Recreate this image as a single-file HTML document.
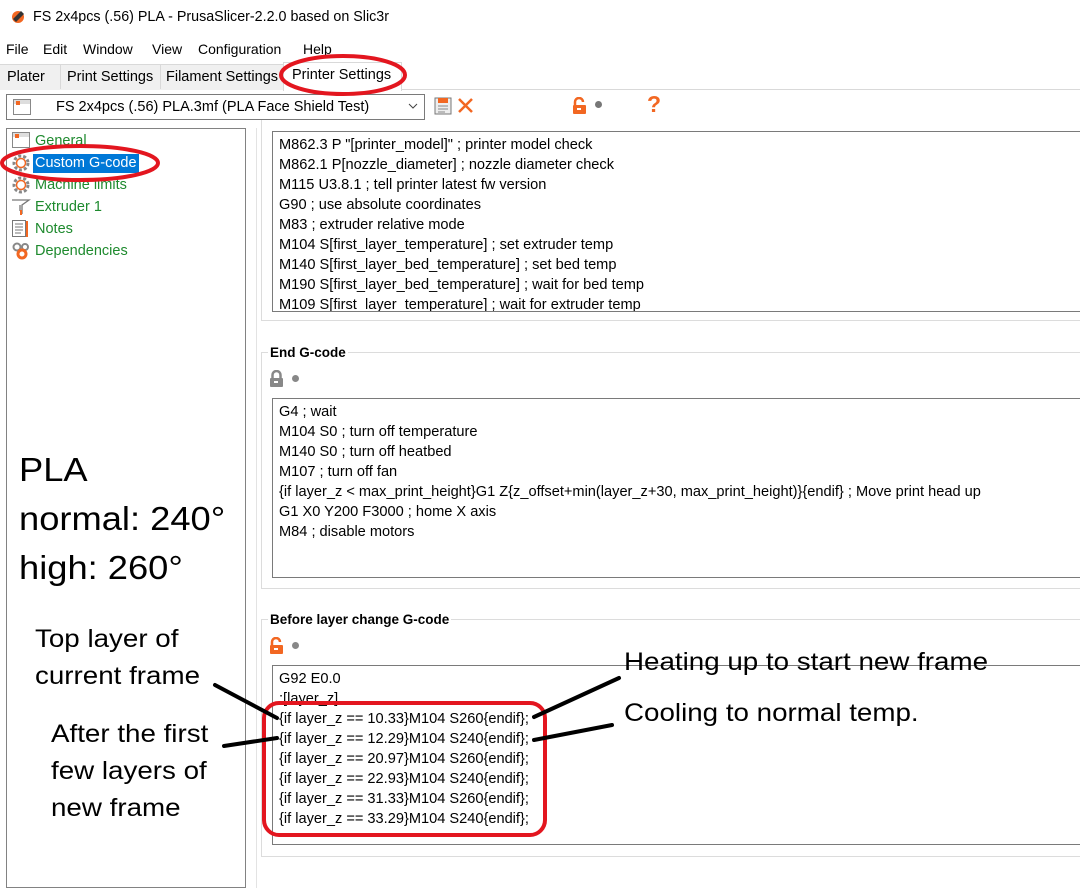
<!DOCTYPE html>
<html><head><meta charset="utf-8"><style>
body{margin:0;width:1080px;height:875px;background:#fff;position:relative;overflow:hidden;font-family:"Liberation Sans",sans-serif;color:#000}
.a{position:absolute;white-space:nowrap}
.s{font-size:14px}
.code{position:absolute;border:1px solid #7a7a7a;background:#fff;font-size:14.6px;line-height:20px;padding:3px 0 0 6px;box-sizing:border-box;overflow:hidden}
.grp{position:absolute;border:1px solid #dcdcdc}
.tree{position:absolute;left:35px;font-size:14.5px;color:#1e8a2e}
.big{font-size:33px;position:absolute;white-space:nowrap;transform:scaleX(1.1);transform-origin:0 0}
.mid{font-size:25px;position:absolute;white-space:nowrap;transform:scaleX(1.11);transform-origin:0 0}
</style></head><body>
<svg class="a" style="left:11px;top:10px" width="14" height="14"><circle cx="7" cy="7" r="6" fill="#f26722"/><path d="M2 9 L10 1 L13 4 L5 12Z" fill="#333"/></svg>
<div class="a s" style="left:33px;top:9px;font-size:14.3px">FS 2x4pcs (.56) PLA - PrusaSlicer-2.2.0 based on Slic3r</div>
<div class="a s" style="left:6px;top:41px">File</div>
<div class="a s" style="left:43px;top:41px">Edit</div>
<div class="a s" style="left:83px;top:41px">Window</div>
<div class="a s" style="left:152px;top:41px">View</div>
<div class="a s" style="left:198px;top:41px">Configuration</div>
<div class="a s" style="left:303px;top:41px">Help</div>
<div class="a" style="left:0;top:63px;width:1080px;height:26px;border-bottom:1px solid #d9d9d9;background:#fff"></div>
<div class="a" style="left:0;top:64px;width:283px;height:25px;background:#f0f0f0;border-top:1px solid #d9d9d9"></div>
<div class="a" style="left:60px;top:65px;width:1px;height:24px;background:#d9d9d9"></div>
<div class="a" style="left:160px;top:65px;width:1px;height:24px;background:#d9d9d9"></div>
<div class="a" style="left:283px;top:62px;width:117px;height:28px;background:#fff;border:1px solid #d9d9d9;border-bottom:none"></div>
<div class="a s" style="left:7px;top:69px;font-size:14.5px">Plater</div>
<div class="a s" style="left:67px;top:69px;font-size:14.5px">Print Settings</div>
<div class="a s" style="left:166px;top:69px;font-size:14.5px">Filament Settings</div>
<div class="a s" style="left:292px;top:67px;font-size:14.5px">Printer Settings</div>
<div class="a" style="left:6px;top:94px;width:419px;height:26px;border:1px solid #7a7a7a;box-sizing:border-box"></div>
<svg class="a" style="left:13px;top:99px" width="18" height="16"><rect x="0.5" y="0.5" width="17" height="15" fill="#fff" stroke="#888"/><rect x="1" y="1" width="16" height="4" fill="#ddd"/><rect x="3" y="2" width="4" height="4" fill="#f26722"/></svg>
<div class="a s" style="left:56px;top:99px;font-size:14.5px">FS 2x4pcs (.56) PLA.3mf (PLA Face Shield Test)</div>
<svg class="a" style="left:408px;top:103px" width="10" height="7"><path d="M1 1 L5 5 L9 1" stroke="#444" fill="none"/></svg>
<svg class="a" style="left:434px;top:97px" width="18" height="18"><rect x="1" y="1" width="16" height="16" fill="#eee" stroke="#777"/><rect x="4" y="1" width="10" height="5" fill="#f26722"/><path d="M4 9h10M4 12h10M4 15h7" stroke="#888"/></svg>
<svg class="a" style="left:457px;top:97px" width="17" height="17"><path d="M2 2 L15 15 M15 2 L2 15" stroke="#f26722" stroke-width="2.5"/></svg>
<svg class="a" style="left:572px;top:97px" width="16" height="18"><path d="M3 8 V5 a4 4 0 0 1 8 0" stroke="#f26722" stroke-width="2.5" fill="none"/><rect x="1" y="8" width="13" height="9" rx="1" fill="#f26722"/><rect x="5" y="11" width="4" height="2" fill="#fff"/></svg>
<div class="a" style="left:595px;top:101px;width:7px;height:7px;border-radius:50%;background:#777"></div>
<div class="a" style="left:647px;top:91px;font-size:23px;font-weight:bold;color:#f26722">?</div>
<div class="a" style="left:6px;top:128px;width:240px;height:760px;border:1px solid #828282;box-sizing:border-box"></div>
<svg class="a" style="left:12px;top:132px" width="18" height="16"><rect x="0.5" y="0.5" width="17" height="15" fill="#fff" stroke="#888"/><rect x="1" y="1" width="16" height="4" fill="#ddd"/><rect x="3" y="2" width="4" height="4" fill="#f26722"/></svg>
<div class="tree" style="top:133px">General</div>
<svg class="a" style="left:12px;top:154px" width="18" height="18"><circle cx="9" cy="9" r="7" fill="none" stroke="#888" stroke-width="3" stroke-dasharray="3 2"/><circle cx="9" cy="9" r="4.5" fill="none" stroke="#f26722" stroke-width="1.5"/></svg>
<div class="a" style="left:33px;top:154px;width:106px;height:19px;background:#0078d7"></div>
<div class="tree" style="top:155px;color:#fff">Custom G-code</div>
<svg class="a" style="left:12px;top:176px" width="18" height="18"><circle cx="9" cy="9" r="7" fill="none" stroke="#888" stroke-width="3" stroke-dasharray="3 2"/><circle cx="9" cy="9" r="4.5" fill="none" stroke="#f26722" stroke-width="1.5"/></svg>
<div class="tree" style="top:177px">Machine limits</div>
<svg class="a" style="left:11px;top:198px" width="20" height="18"><path d="M1 2 H18 L11 7 V16 M9 7 V13" stroke="#777" fill="none" stroke-width="1.3"/><path d="M10 12 V17" stroke="#f26722" stroke-width="2"/></svg>
<div class="tree" style="top:199px">Extruder 1</div>
<svg class="a" style="left:12px;top:220px" width="18" height="18"><rect x="0.5" y="0.5" width="13" height="16" fill="#fff" stroke="#777"/><path d="M3 4h8M3 7h8M3 10h8M3 13h6" stroke="#777"/><rect x="14" y="1" width="2" height="16" fill="#f26722"/></svg>
<div class="tree" style="top:221px">Notes</div>
<svg class="a" style="left:12px;top:242px" width="18" height="18"><circle cx="5" cy="5" r="3.5" fill="none" stroke="#888" stroke-width="2"/><circle cx="13" cy="5" r="3" fill="none" stroke="#888" stroke-width="2"/><circle cx="10" cy="12" r="4" fill="none" stroke="#f26722" stroke-width="3"/></svg>
<div class="tree" style="top:243px">Dependencies</div>
<div class="a" style="left:256px;top:128px;width:1px;height:760px;background:#e3e3e3"></div>
<div class="grp" style="left:261px;top:120px;width:830px;height:200px;border-top:none"></div>
<div class="code" style="left:272px;top:131px;width:820px;height:181px">M862.3 P "[printer_model]" ; printer model check<br>M862.1 P[nozzle_diameter] ; nozzle diameter check<br>M115 U3.8.1 ; tell printer latest fw version<br>G90 ; use absolute coordinates<br>M83 ; extruder relative mode<br>M104 S[first_layer_temperature] ; set extruder temp<br>M140 S[first_layer_bed_temperature] ; set bed temp<br>M190 S[first_layer_bed_temperature] ; wait for bed temp<br>M109 S[first_layer_temperature] ; wait for extruder temp</div>
<div class="grp" style="left:261px;top:352px;width:830px;height:235px"></div>
<div class="a" style="left:268px;top:345px;background:#fff;padding:0 2px;font-size:13.5px;font-weight:bold">End G-code</div>
<svg class="a" style="left:269px;top:370px" width="16" height="18"><path d="M3.5 8 V5 a4 4 0 0 1 8 0 V8" stroke="#888" stroke-width="2.5" fill="none"/><rect x="1" y="8" width="13" height="9" rx="1" fill="#888"/><rect x="5" y="11" width="4" height="2" fill="#fff"/></svg>
<div class="a" style="left:292px;top:375px;width:7px;height:7px;border-radius:50%;background:#888"></div>
<div class="code" style="left:272px;top:398px;width:820px;height:180px">G4 ; wait<br>M104 S0 ; turn off temperature<br>M140 S0 ; turn off heatbed<br>M107 ; turn off fan<br>{if layer_z &lt; max_print_height}G1 Z{z_offset+min(layer_z+30, max_print_height)}{endif} ; Move print head up<br>G1 X0 Y200 F3000 ; home X axis<br>M84 ; disable motors</div>
<div class="grp" style="left:261px;top:619px;width:830px;height:236px"></div>
<div class="a" style="left:268px;top:612px;background:#fff;padding:0 2px;font-size:13.5px;font-weight:bold">Before layer change G-code</div>
<svg class="a" style="left:269px;top:637px" width="16" height="18"><path d="M3 8 V5 a4 4 0 0 1 8 0" stroke="#f26722" stroke-width="2.5" fill="none"/><rect x="1" y="8" width="13" height="9" rx="1" fill="#f26722"/><rect x="5" y="11" width="4" height="2" fill="#fff"/></svg>
<div class="a" style="left:292px;top:642px;width:7px;height:7px;border-radius:50%;background:#888"></div>
<div class="code" style="left:272px;top:665px;width:820px;height:180px">G92 E0.0<br>;[layer_z]<br>{if layer_z == 10.33}M104 S260{endif};<br>{if layer_z == 12.29}M104 S240{endif};<br>{if layer_z == 20.97}M104 S260{endif};<br>{if layer_z == 22.93}M104 S240{endif};<br>{if layer_z == 31.33}M104 S260{endif};<br>{if layer_z == 33.29}M104 S240{endif};</div>
<div class="big" style="left:19px;top:451px">PLA</div>
<div class="big" style="left:19px;top:500px">normal: 240°</div>
<div class="big" style="left:19px;top:549px">high: 260°</div>
<div class="mid" style="left:35px;top:625px">Top layer of</div>
<div class="mid" style="left:35px;top:662px">current frame</div>
<div class="mid" style="left:51px;top:720px">After the first</div>
<div class="mid" style="left:51px;top:757px">few layers of</div>
<div class="mid" style="left:51px;top:794px">new frame</div>
<div class="mid" style="left:624px;top:648px">Heating up to start new frame</div>
<div class="mid" style="left:624px;top:699px">Cooling to normal temp.</div>
<svg class="a" style="left:0;top:0" width="1080" height="875">
<g fill="none" stroke="#e3161f" stroke-width="4">
<ellipse cx="343" cy="75" rx="62" ry="19"/>
<ellipse cx="80" cy="163" rx="78" ry="17"/>
<rect x="264" y="703" width="281" height="132" rx="15"/>
</g>
<g stroke="#000" stroke-width="4" stroke-linecap="round">
<line x1="215" y1="685" x2="277" y2="718"/>
<line x1="224" y1="746" x2="277" y2="738"/>
<line x1="619" y1="678" x2="534" y2="717"/>
<line x1="612" y1="725" x2="534" y2="740"/>
</g>
</svg>
</body></html>
